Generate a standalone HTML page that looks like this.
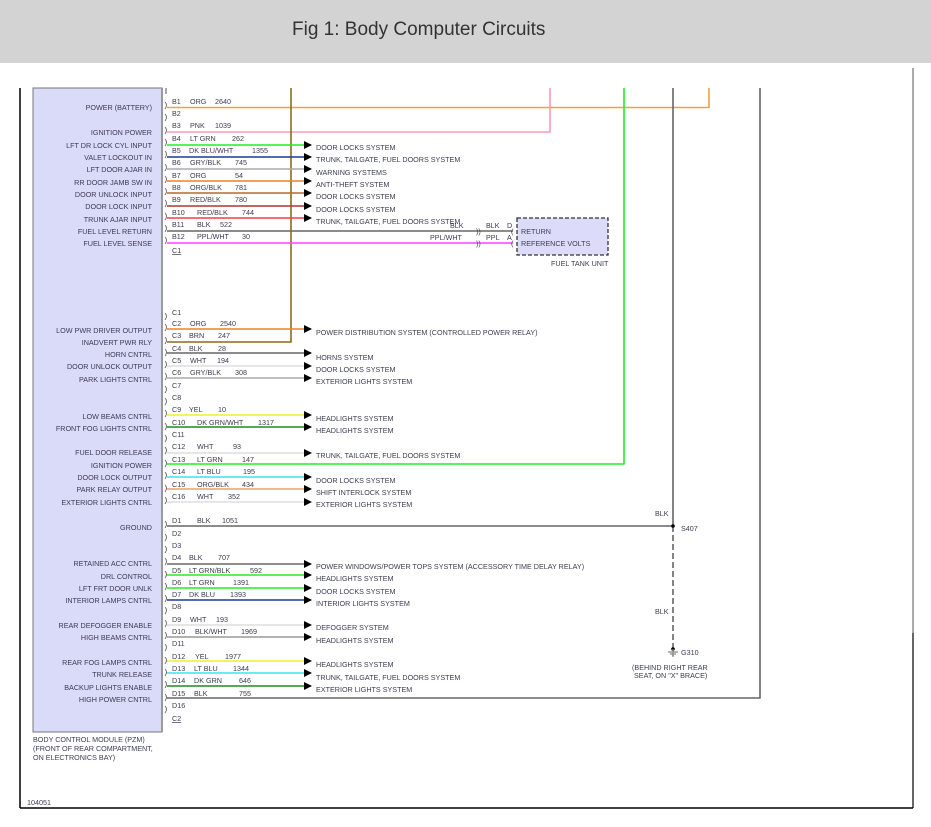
<!DOCTYPE html>
<html><head><meta charset="utf-8"><style>
html,body{margin:0;padding:0;background:#fff;width:931px;height:827px;overflow:hidden}
svg{display:block}
text{font-family:"Liberation Sans",Arial,sans-serif;font-size:7.2px;fill:#3c3c55}
.r{text-anchor:end}
.t{font-size:19px;fill:#333}
</style></head><body>
<svg width="931" height="827" viewBox="0 0 931 827" xmlns="http://www.w3.org/2000/svg">
<defs><marker id="a" markerWidth="8" markerHeight="8" refX="7" refY="4" orient="auto" markerUnits="userSpaceOnUse"><path d="M0,0 L8,4 L0,8 Z" fill="#000"/></marker></defs>
<rect x="0" y="0" width="931" height="63" fill="#d3d3d3"/>
<text class="t" x="292" y="35">Fig 1: Body Computer Circuits</text>
<!-- frame -->
<line x1="20" y1="88" x2="20" y2="808" stroke="#000" stroke-width="1.5"/>
<line x1="20" y1="808" x2="913" y2="808" stroke="#000" stroke-width="1.5"/>
<line x1="913" y1="68" x2="913" y2="808" stroke="#555" stroke-width="1"/>
<line x1="913" y1="633" x2="913" y2="808" stroke="#000" stroke-width="1.2"/>
<!-- module -->
<rect x="33" y="88" width="129" height="644" fill="#dadaf9" stroke="#777" stroke-width="1"/>
<line x1="162" y1="88" x2="162" y2="732" stroke="#999" stroke-width="2"/>
<text x="33" y="742">BODY CONTROL MODULE (PZM)</text>
<text x="33" y="751">(FRONT OF REAR COMPARTMENT,</text>
<text x="33" y="760">ON ELECTRONICS BAY)</text>
<text x="27" y="805">104051</text>
<line x1="166" y1="88" x2="166" y2="94" stroke="#555" stroke-width="1"/>
<!-- verticals -->
<g fill="none" stroke-width="1.6">
<path d="M709,88 V107.5 H167" stroke="#f4a040"/>
<path d="M550,88 V132 H167" stroke="#ff9ab5"/>
<path d="M291,88 V342 H167" stroke="#8a6a20"/>
<path d="M624,88 V464 H167" stroke="#22ee22"/>
<path d="M673,88 V526 H167" stroke="#666"/>
<path d="M760,88 V698 H167" stroke="#666"/>
<path d="M673,526 V648" stroke="#666" stroke-dasharray="6,3"/>
</g>
<circle cx="673" cy="526" r="1.8" fill="#000"/>
<circle cx="673" cy="649" r="1.8" fill="#000"/>
<path d="M668,652 H678 M670,654 H676 M672,656 H674 M673,649 V656" stroke="#888" stroke-width="1.2"/>
<text x="655" y="516">BLK</text><text x="681" y="531">S407</text>
<text x="655" y="614">BLK</text><text x="681" y="655">G310</text>
<text x="632" y="670">(BEHIND RIGHT REAR</text><text x="634" y="678">SEAT, ON "X" BRACE)</text>
<!-- arrow wires -->
<g fill="none" stroke-width="1.6" marker-end="url(#a)">
<path d="M167,145 H311" stroke="#22ee22"/>
<path d="M167,157 H311" stroke="#1a3a9a"/>
<path d="M167,169 H311" stroke="#aaa"/>
<path d="M167,181 H311" stroke="#f08020"/>
<path d="M167,193 H311" stroke="#b8682a"/>
<path d="M167,206 H311" stroke="#b83030"/>
<path d="M167,218 H311" stroke="#f04040"/>
<path d="M167,329 H311" stroke="#f08020"/>
<path d="M167,353 H311" stroke="#666"/>
<path d="M167,366 H311" stroke="#ddd"/>
<path d="M167,378 H311" stroke="#aaa"/>
<path d="M167,415 H311" stroke="#f0f020"/>
<path d="M167,427 H311" stroke="#228822"/>
<path d="M167,453 H311" stroke="#ddd"/>
<path d="M167,477 H311" stroke="#30e8f0"/>
<path d="M167,489 H311" stroke="#f0a060"/>
<path d="M167,502 H311" stroke="#ddd"/>
<path d="M167,564 H311" stroke="#666"/>
<path d="M167,575 H311" stroke="#22ee22"/>
<path d="M167,588 H311" stroke="#22ee22"/>
<path d="M167,600 H311" stroke="#1a3a9a"/>
<path d="M167,625 H311" stroke="#ddd"/>
<path d="M167,637 H311" stroke="#999"/>
<path d="M167,661 H311" stroke="#f0f020"/>
<path d="M167,673 H311" stroke="#30e8f0"/>
<path d="M167,686 H311" stroke="#228822"/>
</g>
<!-- fuel wires -->
<path d="M167,231 H513" stroke="#666" stroke-width="1.6"/>
<path d="M167,243 H513" stroke="#ff40ff" stroke-width="1.6"/>
<text x="476" y="234">))</text><text x="476" y="246">))</text>
<text x="511" y="234">(</text><text x="511" y="246">(</text>
<text x="450" y="228">BLK</text><text x="486" y="228">BLK</text><text x="507" y="228">D</text>
<text x="430" y="240">PPL/WHT</text><text x="486" y="240">PPL</text><text x="507" y="240">A</text>
<rect x="517" y="218" width="91" height="37" fill="#dcdcfa" stroke="#333" stroke-dasharray="4,2" stroke-width="1.3"/>
<text x="521" y="234">RETURN</text><text x="521" y="246">REFERENCE VOLTS</text>
<text x="551" y="266">FUEL TANK UNIT</text>
<!-- destinations -->
<g>
<text x="316" y="150">DOOR LOCKS SYSTEM</text>
<text x="316" y="162">TRUNK, TAILGATE, FUEL DOORS SYSTEM</text>
<text x="316" y="175">WARNING SYSTEMS</text>
<text x="316" y="187">ANTI-THEFT SYSTEM</text>
<text x="316" y="199">DOOR LOCKS SYSTEM</text>
<text x="316" y="212">DOOR LOCKS SYSTEM</text>
<text x="316" y="224">TRUNK, TAILGATE, FUEL DOORS SYSTEM</text>
<text x="316" y="335">POWER DISTRIBUTION SYSTEM (CONTROLLED POWER RELAY)</text>
<text x="316" y="360">HORNS SYSTEM</text>
<text x="316" y="372">DOOR LOCKS SYSTEM</text>
<text x="316" y="384">EXTERIOR LIGHTS SYSTEM</text>
<text x="316" y="421">HEADLIGHTS SYSTEM</text>
<text x="316" y="433">HEADLIGHTS SYSTEM</text>
<text x="316" y="458">TRUNK, TAILGATE, FUEL DOORS SYSTEM</text>
<text x="316" y="483">DOOR LOCKS SYSTEM</text>
<text x="316" y="495">SHIFT INTERLOCK SYSTEM</text>
<text x="316" y="507">EXTERIOR LIGHTS SYSTEM</text>
<text x="316" y="569">POWER WINDOWS/POWER TOPS SYSTEM (ACCESSORY TIME DELAY RELAY)</text>
<text x="316" y="581">HEADLIGHTS SYSTEM</text>
<text x="316" y="594">DOOR LOCKS SYSTEM</text>
<text x="316" y="606">INTERIOR LIGHTS SYSTEM</text>
<text x="316" y="630">DEFOGGER SYSTEM</text>
<text x="316" y="643">HEADLIGHTS SYSTEM</text>
<text x="316" y="667">HEADLIGHTS SYSTEM</text>
<text x="316" y="680">TRUNK, TAILGATE, FUEL DOORS SYSTEM</text>
<text x="316" y="692">EXTERIOR LIGHTS SYSTEM</text>
</g>
<!-- module labels -->
<g class="r">
<text class="r" x="152" y="110">POWER (BATTERY)</text>
<text class="r" x="152" y="135">IGNITION POWER</text>
<text class="r" x="152" y="148">LFT DR LOCK CYL INPUT</text>
<text class="r" x="152" y="160">VALET LOCKOUT IN</text>
<text class="r" x="152" y="172">LFT DOOR AJAR IN</text>
<text class="r" x="152" y="185">RR DOOR JAMB SW IN</text>
<text class="r" x="152" y="197">DOOR UNLOCK INPUT</text>
<text class="r" x="152" y="209">DOOR LOCK INPUT</text>
<text class="r" x="152" y="222">TRUNK AJAR INPUT</text>
<text class="r" x="152" y="234">FUEL LEVEL RETURN</text>
<text class="r" x="152" y="246">FUEL LEVEL SENSE</text>
<text class="r" x="152" y="333">LOW PWR DRIVER OUTPUT</text>
<text class="r" x="152" y="345">INADVERT PWR RLY</text>
<text class="r" x="152" y="357">HORN CNTRL</text>
<text class="r" x="152" y="369">DOOR UNLOCK OUTPUT</text>
<text class="r" x="152" y="382">PARK LIGHTS CNTRL</text>
<text class="r" x="152" y="419">LOW BEAMS CNTRL</text>
<text class="r" x="152" y="431">FRONT FOG LIGHTS CNTRL</text>
<text class="r" x="152" y="455">FUEL DOOR RELEASE</text>
<text class="r" x="152" y="468">IGNITION POWER</text>
<text class="r" x="152" y="480">DOOR LOCK OUTPUT</text>
<text class="r" x="152" y="492">PARK RELAY OUTPUT</text>
<text class="r" x="152" y="505">EXTERIOR LIGHTS CNTRL</text>
<text class="r" x="152" y="530">GROUND</text>
<text class="r" x="152" y="566">RETAINED ACC CNTRL</text>
<text class="r" x="152" y="579">DRL CONTROL</text>
<text class="r" x="152" y="591">LFT FRT DOOR UNLK</text>
<text class="r" x="152" y="603">INTERIOR LAMPS CNTRL</text>
<text class="r" x="152" y="628">REAR DEFOGGER ENABLE</text>
<text class="r" x="152" y="640">HIGH BEAMS CNTRL</text>
<text class="r" x="152" y="665">REAR FOG LAMPS CNTRL</text>
<text class="r" x="152" y="677">TRUNK RELEASE</text>
<text class="r" x="152" y="690">BACKUP LIGHTS ENABLE</text>
<text class="r" x="152" y="702">HIGH POWER CNTRL</text>
</g>
<!-- pin brackets -->
<g fill="none" stroke="#555" stroke-width="0.8">
<path d="M165,102 q3,3 0,7 M165,114 q3,3 0,7 M165,127 q3,3 0,7 M165,139 q3,3 0,7 M165,151 q3,3 0,7 M165,164 q3,3 0,7 M165,176 q3,3 0,7 M165,188 q3,3 0,7 M165,200 q3,3 0,7 M165,213 q3,3 0,7 M165,225 q3,3 0,7 M165,237 q3,3 0,7"/>
<path d="M165,313 q3,3 0,7 M165,324 q3,3 0,7 M165,337 q3,3 0,7 M165,349 q3,3 0,7 M165,361 q3,3 0,7 M165,373 q3,3 0,7 M165,386 q3,3 0,7 M165,398 q3,3 0,7 M165,410 q3,3 0,7 M165,423 q3,3 0,7 M165,435 q3,3 0,7 M165,447 q3,3 0,7 M165,460 q3,3 0,7 M165,472 q3,3 0,7 M165,485 q3,3 0,7 M165,497 q3,3 0,7"/>
<path d="M165,521 q3,3 0,7 M165,534 q3,3 0,7 M165,546 q3,3 0,7 M165,558 q3,3 0,7 M165,571 q3,3 0,7 M165,583 q3,3 0,7 M165,595 q3,3 0,7 M165,607 q3,3 0,7 M165,620 q3,3 0,7 M165,632 q3,3 0,7 M165,644 q3,3 0,7 M165,657 q3,3 0,7 M165,669 q3,3 0,7 M165,681 q3,3 0,7 M165,694 q3,3 0,7 M165,706 q3,3 0,7"/>
</g>
<!-- pin labels -->
<g>
<text x="172" y="104">B1</text><text x="190" y="104">ORG</text><text x="215" y="104">2640</text>
<text x="172" y="116">B2</text>
<text x="172" y="128">B3</text><text x="190" y="128">PNK</text><text x="215" y="128">1039</text>
<text x="172" y="141">B4</text><text x="190" y="141">LT GRN</text><text x="232" y="141">262</text>
<text x="172" y="153">B5</text><text x="189" y="153">DK BLU/WHT</text><text x="252" y="153">1355</text>
<text x="172" y="165">B6</text><text x="190" y="165">GRY/BLK</text><text x="235" y="165">745</text>
<text x="172" y="178">B7</text><text x="190" y="178">ORG</text><text x="235" y="178">54</text>
<text x="172" y="190">B8</text><text x="190" y="190">ORG/BLK</text><text x="235" y="190">781</text>
<text x="172" y="202">B9</text><text x="190" y="202">RED/BLK</text><text x="235" y="202">780</text>
<text x="172" y="215">B10</text><text x="197" y="215">RED/BLK</text><text x="242" y="215">744</text>
<text x="172" y="227">B11</text><text x="197" y="227">BLK</text><text x="220" y="227">522</text>
<text x="172" y="239">B12</text><text x="197" y="239">PPL/WHT</text><text x="242" y="239">30</text>
<text x="172" y="253" text-decoration="underline">C1</text>
<text x="172" y="315">C1</text>
<text x="172" y="326">C2</text><text x="190" y="326">ORG</text><text x="220" y="326">2540</text>
<text x="172" y="338">C3</text><text x="189" y="338">BRN</text><text x="218" y="338">247</text>
<text x="172" y="351">C4</text><text x="189" y="351">BLK</text><text x="218" y="351">28</text>
<text x="172" y="363">C5</text><text x="190" y="363">WHT</text><text x="217" y="363">194</text>
<text x="172" y="375">C6</text><text x="190" y="375">GRY/BLK</text><text x="235" y="375">308</text>
<text x="172" y="388">C7</text>
<text x="172" y="400">C8</text>
<text x="172" y="412">C9</text><text x="189" y="412">YEL</text><text x="218" y="412">10</text>
<text x="172" y="425">C10</text><text x="197" y="425">DK GRN/WHT</text><text x="258" y="425">1317</text>
<text x="172" y="437">C11</text>
<text x="172" y="449">C12</text><text x="197" y="449">WHT</text><text x="233" y="449">93</text>
<text x="172" y="462">C13</text><text x="197" y="462">LT GRN</text><text x="242" y="462">147</text>
<text x="172" y="474">C14</text><text x="197" y="474">LT BLU</text><text x="243" y="474">195</text>
<text x="172" y="487">C15</text><text x="197" y="487">ORG/BLK</text><text x="242" y="487">434</text>
<text x="172" y="499">C16</text><text x="197" y="499">WHT</text><text x="228" y="499">352</text>
<text x="172" y="523">D1</text><text x="197" y="523">BLK</text><text x="222" y="523">1051</text>
<text x="172" y="536">D2</text>
<text x="172" y="548">D3</text>
<text x="172" y="560">D4</text><text x="189" y="560">BLK</text><text x="218" y="560">707</text>
<text x="172" y="573">D5</text><text x="189" y="573">LT GRN/BLK</text><text x="250" y="573">592</text>
<text x="172" y="585">D6</text><text x="189" y="585">LT GRN</text><text x="233" y="585">1391</text>
<text x="172" y="597">D7</text><text x="189" y="597">DK BLU</text><text x="230" y="597">1393</text>
<text x="172" y="609">D8</text>
<text x="172" y="622">D9</text><text x="190" y="622">WHT</text><text x="216" y="622">193</text>
<text x="172" y="634">D10</text><text x="195" y="634">BLK/WHT</text><text x="241" y="634">1969</text>
<text x="172" y="646">D11</text>
<text x="172" y="659">D12</text><text x="195" y="659">YEL</text><text x="225" y="659">1977</text>
<text x="172" y="671">D13</text><text x="194" y="671">LT BLU</text><text x="233" y="671">1344</text>
<text x="172" y="683">D14</text><text x="194" y="683">DK GRN</text><text x="239" y="683">646</text>
<text x="172" y="696">D15</text><text x="194" y="696">BLK</text><text x="239" y="696">755</text>
<text x="172" y="708">D16</text>
<text x="172" y="721" text-decoration="underline">C2</text>
</g>
</svg>
</body></html>
